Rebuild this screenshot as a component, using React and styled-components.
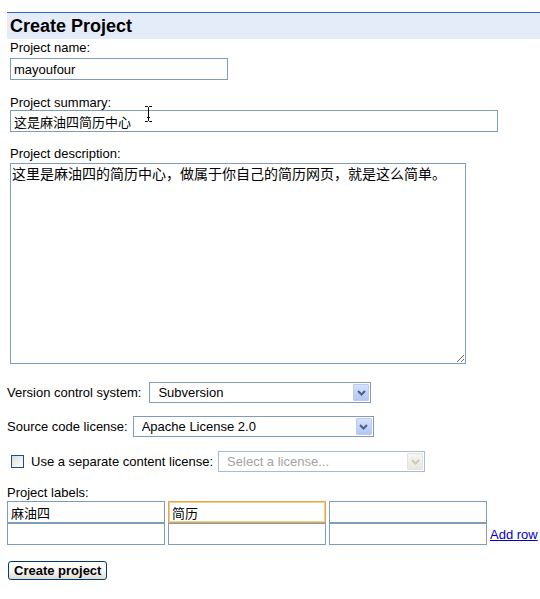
import React from "react";
import styled, { createGlobalStyle } from "styled-components";

const GlobalStyle = createGlobalStyle`
  html, body {
    margin: 0;
    padding: 0;
    background: #ffffff;
  }
  body {
    font-family: "Liberation Sans", Arial, "Noto Sans CJK SC", sans-serif;
    font-size: 13px;
    color: #000000;
  }
`;

const FONT = `"Liberation Sans", Arial, "Noto Sans CJK SC", sans-serif`;

const Page = styled.div`
  position: relative;
  padding: 12px 0 20px 7px;
`;

const Header = styled.h1`
  margin: 0;
  height: 26px;
  border-top: 1px solid #3366cc;
  background: #e5ecf9;
  padding-left: 3px;
  font: bold 18px/26px ${FONT};
  color: #000;
`;

const Field = styled.div`
  margin: ${(p) => p.$top}px 0 0 3px;
`;

const FieldLabel = styled.label`
  display: block;
  line-height: 15px;
`;

const TextInput = styled.input`
  display: block;
  box-sizing: border-box;
  width: ${(p) => (p.$width ? `${p.$width}px` : "100%")};
  height: 22px;
  margin: ${(p) => p.$gap || 0}px 0 0 0;
  padding: 0 3px;
  border: 1px solid ${(p) => (p.$focused ? "#e2a64c" : "#7f9db9")};
  box-shadow: ${(p) => (p.$focused ? "inset 0 0 0 1px #f3cf8e" : "none")};
  background: #fff;
  font: 13px ${FONT};
  color: #000;
  outline: none;
`;

const TextArea = styled.textarea`
  display: block;
  box-sizing: border-box;
  width: 456px;
  height: 201px;
  margin-top: 2px;
  padding: 2px 1px;
  border: 1px solid #7f9db9;
  background: #fff;
  font: 14px/17px ${FONT};
  color: #000;
  outline: none;
`;

const OptionRow = styled.div`
  display: flex;
  align-items: center;
  gap: ${(p) => p.$gap}px;
  height: 21px;
  margin-top: ${(p) => p.$top}px;
`;

const SelectFrame = styled.div`
  display: flex;
  align-items: center;
  box-sizing: border-box;
  width: ${(p) => p.$width}px;
  height: 21px;
  padding: 1px;
  border: 1px solid ${(p) => (p.$disabled ? "#a9bbd0" : "#7f9db9")};
  background: #fff;
`;

const NativeSelect = styled.select`
  flex: 1;
  min-width: 0;
  height: 100%;
  appearance: none;
  -webkit-appearance: none;
  border: none;
  outline: none;
  background: transparent;
  padding: 0 0 0 7px;
  margin: 0;
  font: 13px ${FONT};
  color: ${(p) => (p.disabled ? "#a3a3a3" : "#000")};
  opacity: 1;
`;

const ArrowBox = styled.span`
  display: flex;
  align-items: center;
  justify-content: center;
  box-sizing: border-box;
  width: 16px;
  height: 17px;
  border: 1px solid ${(p) => (p.$disabled ? "#e4e2da" : "#bccbf4")};
  border-radius: 1px;
  background: ${(p) =>
    p.$disabled
      ? "linear-gradient(#f6f5f0, #e9e7df)"
      : "linear-gradient(#d6e1fb, #b3c7f5)"};
  color: ${(p) => (p.$disabled ? "#c9c7ba" : "#4d6185")};
`;

const Checkbox = styled.input.attrs({ type: "checkbox" })`
  appearance: none;
  -webkit-appearance: none;
  box-sizing: border-box;
  width: 13px;
  height: 13px;
  margin: 0 2px 0 4px;
  border: 1px solid #1c5180;
  background: linear-gradient(135deg, #dcdcd7, #ffffff);
`;

const CheckLabel = styled.span`
  margin-right: ${(p) => p.$after || 0}px;
`;

const SectionLabel = styled.div`
  margin-top: ${(p) => p.$top}px;
  line-height: 15px;
`;

const LabelsGrid = styled.div`
  display: grid;
  grid-template-columns: repeat(3, 158px) auto;
  grid-auto-rows: 22px;
  column-gap: 3px;
  margin-top: 1px;
`;

const AddRow = styled.a`
  grid-column: 4;
  grid-row: 2;
  align-self: center;
  line-height: 15px;
  color: #0000cc;
  text-decoration: underline;
  cursor: pointer;
`;

const SubmitButton = styled.button`
  display: block;
  box-sizing: border-box;
  height: 19px;
  margin: 16px 0 0 1px;
  padding: 0 5px;
  border: 1px solid #003c74;
  border-radius: 3px;
  background: linear-gradient(#ffffff 0%, #f4f3ee 60%, #dedbcf 100%);
  font: bold 13px/15px ${FONT};
  color: #000;
`;

const Cursor = styled.svg`
  position: absolute;
  left: 145px;
  top: 106px;
  pointer-events: none;
`;

function Chevron() {
  return (
    <svg width="9" height="6" viewBox="0 0 9 6" fill="none">
      <path d="M1 1 L4.5 4.5 L8 1" stroke="currentColor" strokeWidth="2" />
    </svg>
  );
}

function Select({ width, value, options, disabled }) {
  return (
    <SelectFrame $width={width} $disabled={disabled}>
      <NativeSelect defaultValue={value} disabled={disabled}>
        {options.map((o) => (
          <option key={o} value={o}>
            {o}
          </option>
        ))}
      </NativeSelect>
      <ArrowBox $disabled={disabled}>
        <Chevron />
      </ArrowBox>
    </SelectFrame>
  );
}

export default function App() {
  return (
    <>
      <GlobalStyle />
      <Page>
        <Header>Create Project</Header>

        <Field $top={1}>
          <FieldLabel>Project name:</FieldLabel>
          <TextInput $width={218} $gap={3} defaultValue="mayoufour" />
        </Field>

        <Field $top={15}>
          <FieldLabel>Project summary:</FieldLabel>
          <TextInput $width={488} defaultValue="这是麻油四简历中心" />
        </Field>

        <Field $top={14}>
          <FieldLabel>Project description:</FieldLabel>
          <TextArea defaultValue="这里是麻油四的简历中心，做属于你自己的简历网页，就是这么简单。" />
        </Field>

        <OptionRow $top={18} $gap={8}>
          <span>Version control system:</span>
          <Select width={222} value="Subversion" options={["Subversion", "Mercurial"]} />
        </OptionRow>

        <OptionRow $top={13} $gap={5}>
          <span>Source code license:</span>
          <Select
            width={241}
            value="Apache License 2.0"
            options={["Apache License 2.0", "GNU GPL v3", "MIT License"]}
          />
        </OptionRow>

        <OptionRow $top={14} $gap={5}>
          <Checkbox />
          <CheckLabel>Use a separate content license:</CheckLabel>
          <Select width={207} value="Select a license..." options={["Select a license..."]} disabled />
        </OptionRow>

        <SectionLabel $top={13}>Project labels:</SectionLabel>
        <LabelsGrid>
          <TextInput defaultValue="麻油四" />
          <TextInput defaultValue="简历" $focused />
          <TextInput />
          <span />
          <TextInput />
          <TextInput />
          <TextInput />
          <AddRow>Add row</AddRow>
        </LabelsGrid>

        <SubmitButton>Create project</SubmitButton>

        <Cursor width="7" height="16" viewBox="0 0 7 16" fill="none">
          <path
            d="M0 0.5 H2.5 L3.5 1.5 L4.5 0.5 H7 M3.5 1.5 V14.5 M0 15.5 H2.5 L3.5 14.5 L4.5 15.5 H7 M2 11.5 H5"
            stroke="#000"
            strokeWidth="1"
          />
        </Cursor>
      </Page>
    </>
  );
}
